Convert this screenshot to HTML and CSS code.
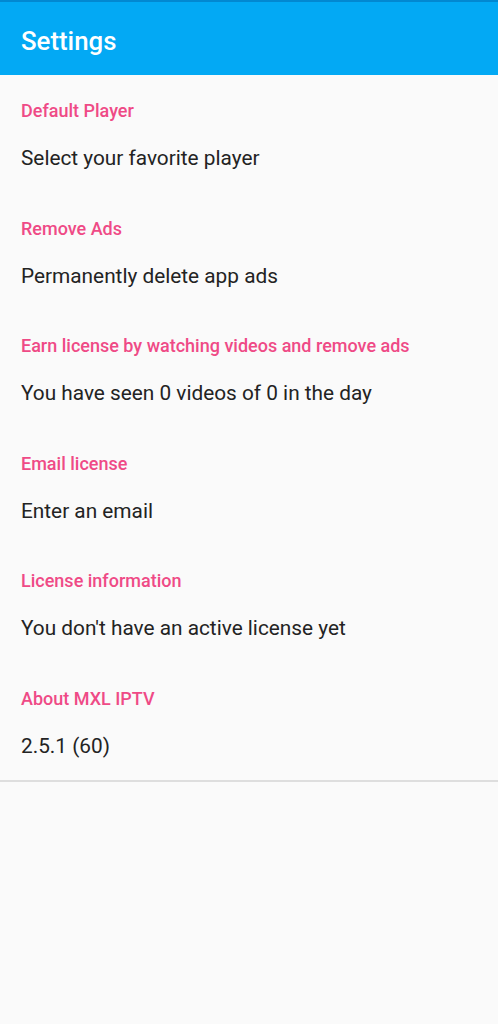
FILE: index.html
```html
<!DOCTYPE html>
<html lang="en">
<head>
<meta charset="utf-8">
<title>Settings</title>
<link rel="stylesheet" href="styles.css">
</head>
<body>
<div class="statusbar"></div>
<header class="appbar"><h1 class="appbar-title">Settings</h1></header>
<main class="prefs">
  <section class="group">
    <div class="group-title">Default Player</div>
    <div class="pref">Select your favorite player</div>
  </section>
  <section class="group">
    <div class="group-title">Remove Ads</div>
    <div class="pref">Permanently delete app ads</div>
  </section>
  <section class="group">
    <div class="group-title">Earn license by watching videos and remove ads</div>
    <div class="pref">You have seen 0 videos of 0 in the day</div>
  </section>
  <section class="group">
    <div class="group-title">Email license</div>
    <div class="pref">Enter an email</div>
  </section>
  <section class="group">
    <div class="group-title">License information</div>
    <div class="pref">You don't have an active license yet</div>
  </section>
  <section class="group">
    <div class="group-title">About MXL IPTV</div>
    <div class="pref">2.5.1 (60)</div>
  </section>
</main>
</body>
</html>
```
FILE: styles.css
```css
* { box-sizing: border-box; }
html, body {
  margin: 0;
  padding: 0;
  background: #fafafa;
  font-family: Roboto, "Noto Sans", "Liberation Sans", sans-serif;
  height: 1024px;
}
.statusbar {
  height: 2px;
  background: #0288d1;
}
.appbar {
  height: 73px;
  background: #03a9f4;
  display: flex;
  align-items: center;
  padding: 4px 21px 0;
}
.appbar-title {
  margin: 0;
  color: #ffffff;
  font-size: 25.8px;
  font-weight: 500;
  line-height: 30px;
}
.prefs {
  border-bottom: 2px solid #dedede;
}
.group-title {
  padding: 24px 21px 0;
  line-height: 24px;
  font-size: 18px;
  font-weight: 500;
  color: #ef4a86;
}
.pref {
  padding: 23px 21px 22.5px;
  line-height: 24px;
  font-size: 20.8px;
  color: #232323;
}
```
